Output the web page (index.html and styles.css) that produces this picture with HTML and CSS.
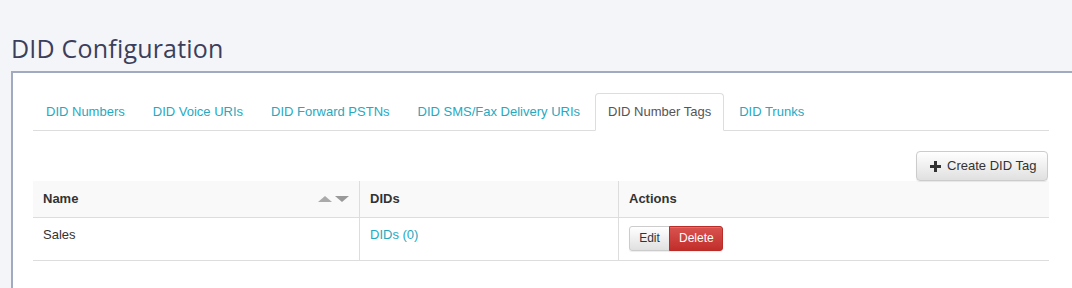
FILE: index.html
```html
<!DOCTYPE html>
<html>
<head>
<meta charset="utf-8">
<link rel="stylesheet" href="styles.css">
</head>
<body>
<div class="page">
  <h1 class="title">DID Configuration</h1>
  <div class="panel">
    <div class="inner">
      <ul class="tabs">
        <li class="tab"><a>DID Numbers</a></li>
        <li class="tab"><a>DID Voice URIs</a></li>
        <li class="tab"><a>DID Forward PSTNs</a></li>
        <li class="tab"><a>DID SMS/Fax Delivery URIs</a></li>
        <li class="tab active"><a>DID Number Tags</a></li>
        <li class="tab"><a>DID Trunks</a></li>
      </ul>
      <div class="toolbar">
        <button class="btn btn-create"><svg class="plus" width="11" height="11" viewBox="0 0 11 11"><rect x="4" y="0" width="3" height="11" fill="#333"/><rect x="0" y="4" width="11" height="3" fill="#333"/></svg>Create DID Tag</button>
      </div>
      <table class="grid">
        <thead>
          <tr>
            <th class="c1"><div class="th-sort"><span>Name</span><span class="arrows"><span class="up"></span><span class="down"></span></span></div></th>
            <th class="c2">DIDs</th>
            <th class="c3">Actions</th>
          </tr>
        </thead>
        <tbody>
          <tr>
            <td><div class="cell-text">Sales</div></td>
            <td><div class="cell-text"><a class="link">DIDs (0)</a></div></td>
            <td><div class="btn-group"><button class="btn btn-sm btn-edit">Edit</button><button class="btn btn-sm btn-delete">Delete</button></div></td>
          </tr>
        </tbody>
      </table>
    </div>
  </div>
</div>
</body>
</html>
```

FILE: styles.css
```css
html, body {
  margin: 0;
  padding: 0;
  background: #f4f5f9;
  overflow: hidden;
}
.page {
  width: 1072px;
  height: 288px;
  overflow: hidden;
}
.title {
  margin: 0;
  padding: 31px 0 0 11px;
  height: 40px;
  font-family: "Open Sans", sans-serif;
  font-weight: 400;
  font-size: 25px;
  line-height: 34px;
  color: #3b3f5c;
  letter-spacing: 0.2px;
}
.panel {
  margin-left: 11px;
  width: 1100px;
  height: 300px;
  background: #fff;
  border-top: 2px solid #a1aac0;
  border-left: 2px solid #a1aac0;
  box-sizing: border-box;
}
.inner {
  width: 1016px;
  padding: 20px 0 0 20px;
  font-family: "Liberation Sans", Arial, sans-serif;
  font-size: 13px;
  color: #333;
}
.tabs {
  list-style: none;
  margin: 0;
  padding: 0;
  display: flex;
  border-bottom: 1px solid #ddd;
}
.tab {
  margin-right: 2px;
  margin-bottom: -1px;
}
.tab a {
  display: block;
  padding: 10px 12px;
  line-height: 16px;
  color: #26a9bf;
  border: 1px solid transparent;
  border-radius: 4px 4px 0 0;
}
.tab.active a {
  color: #555;
  background: #fff;
  border-color: #ddd #ddd transparent #ddd;
}
.toolbar {
  display: flex;
  justify-content: flex-end;
  padding-top: 20px;
}
.btn {
  font-family: "Liberation Sans", Arial, sans-serif;
  font-size: 13px;
  color: #333;
  border: 1px solid #ccc;
  border-radius: 4px;
  background: linear-gradient(#fff, #e0e0e0);
  box-shadow: inset 0 1px 0 rgba(255,255,255,.15), 0 1px 1px rgba(0,0,0,.075);
  cursor: pointer;
}
.btn-create {
  height: 30px;
  width: 132px;
  padding: 0 0 0 13px;
  margin-right: 1px;
  display: flex;
  align-items: center;
  line-height: 16px;
}
.plus {
  margin-right: 6px;
}
.grid {
  width: 1016px;
  border-collapse: collapse;
  table-layout: fixed;
}
.grid th, .grid td {
  text-align: left;
  padding: 10px 10px;
  line-height: 16px;
  border-left: 1px solid #ddd;
  vertical-align: middle;
}
.grid th:first-child, .grid td:first-child {
  border-left: none;
}
.grid thead tr {
  background: #f9f9f9;
  border-bottom: 1px solid #ddd;
}
.grid th {
  font-weight: bold;
}
.grid tbody tr {
  border-bottom: 1px solid #ddd;
}
.grid td {
  padding: 8px 10px 9px 10px;
  height: 25px;
  vertical-align: top;
}
.cell-text {
  padding-top: 1px;
}
.c1 { width: 306px; }
.c2 { width: 238px; }
.th-sort {
  display: flex;
  justify-content: space-between;
  align-items: center;
}
.arrows {
  display: flex;
  gap: 3px;
  margin-right: 0;
}
.up {
  width: 0; height: 0;
  border-left: 7px solid transparent;
  border-right: 7px solid transparent;
  border-bottom: 6px solid #aaa;
}
.down {
  width: 0; height: 0;
  border-left: 7px solid transparent;
  border-right: 7px solid transparent;
  border-top: 6px solid #999;
}
.link {
  color: #26a9bf;
}
.btn-group {
  display: flex;
}
.btn-sm {
  font-size: 12px;
  height: 25px;
  padding: 0 9px;
  line-height: 15px;
}
.btn-edit {
  border-radius: 3px 0 0 3px;
  width: 41px;
}
.btn-delete {
  color: #fff;
  border-color: #b92c28;
  background: linear-gradient(#d9534f, #c12e2a);
  border-radius: 0 3px 3px 0;
  margin-left: -1px;
  width: 54px;
}
```
